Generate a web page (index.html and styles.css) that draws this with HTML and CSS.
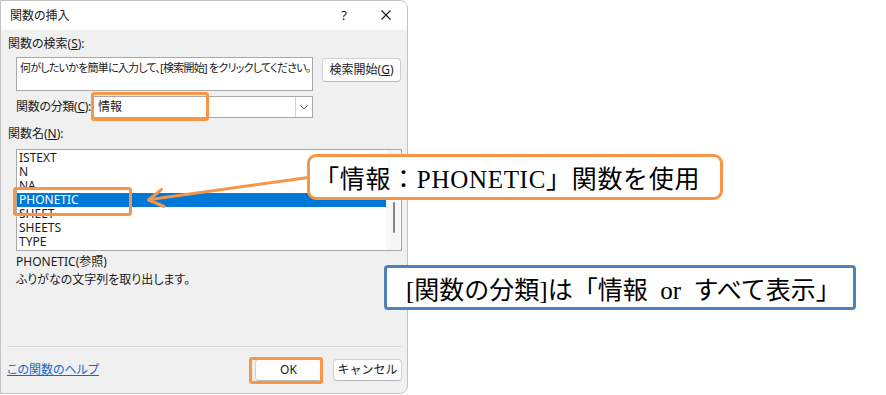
FILE: index.html
```html
<!DOCTYPE html>
<html lang="ja">
<head>
  <meta charset="UTF-8">
  <title>関数の挿入</title>
  <link rel="stylesheet" href="styles.css">
</head>
<body>

<div class="dialog">
  <div class="titlebar">
    <span class="title">関数の挿入</span>
    <div class="caption-btns">
      <span class="cap-btn help">?</span>
      <span class="cap-btn close">
        <svg viewBox="0 0 10 10" width="10" height="10">
          <path d="M0.5 0.5 L9.5 9.5 M9.5 0.5 L0.5 9.5" stroke="#1a1a1a" stroke-width="1.1" fill="none"/>
        </svg>
      </span>
    </div>
  </div>

  <div class="dialog-body">
    <div class="label first">関数の検索(<u>S</u>):</div>
    <div class="search-row">
      <div class="search-box">何がしたいかを簡単に入力して、[検索開始] をクリックしてください。</div>
      <button class="btn search-btn">検索開始(<u>G</u>)</button>
    </div>

    <div class="category-row">
      <span class="cat-label">関数の分類(<u>C</u>):</span>
      <div class="select-box">
        <span class="select-value">情報</span>
        <span class="select-arrow">
          <svg viewBox="0 0 8 5" width="8" height="5">
            <path d="M0.5 0.5 L4 4 L7.5 0.5" stroke="#606060" stroke-width="1" fill="none"/>
          </svg>
        </span>
      </div>
    </div>

    <div class="label second">関数名(<u>N</u>):</div>
    <div class="list-box">
      <ul class="func-list">
        <li>ISTEXT</li>
        <li>N</li>
        <li>NA</li>
        <li class="selected">PHONETIC</li>
        <li>SHEET</li>
        <li>SHEETS</li>
        <li>TYPE</li>
      </ul>
      <div class="scrollbar"><div class="thumb"></div></div>
    </div>

    <div class="desc">
      <div>PHONETIC(参照)</div>
      <div>ふりがなの文字列を取り出します。</div>
    </div>

    <div class="separator"></div>

    <div class="footer">
      <a class="help-link" href="#">この関数のヘルプ</a>
      <div class="footer-btns">
        <button class="btn ok-btn">OK</button>
        <button class="btn cancel-btn">キャンセル</button>
      </div>
    </div>
  </div>
</div>

<!-- annotations drawn over the screenshot -->
<div class="mark mark-category"></div>
<div class="mark mark-phonetic"></div>
<div class="mark mark-ok"></div>

<svg class="arrow" viewBox="0 0 886 395" width="886" height="395">
  <path d="M150 199.5 L312 177" stroke="#f79646" stroke-width="3" fill="none" stroke-linecap="round"/>
  <path d="M161.5 189.5 L148.5 200 L164 206.5" stroke="#f79646" stroke-width="3" fill="none" stroke-linecap="round" stroke-linejoin="round"/>
</svg>

<div class="callout callout-orange">「情報：PHONETIC」関数を使用</div>
<div class="callout callout-blue">[関数の分類]は「情報&nbsp;&nbsp;or&nbsp;&nbsp;すべて表示」</div>

</body>
</html>
```

FILE: styles.css
```css
:root {
  --orange: #f79646;
  --blue: #4f81bd;
  --dialog-bg: #f0f0f0;
  --field-border: #a9a9a9;
  --select: #0078d7;
}
body {
  margin: 0;
  width: 886px;
  height: 395px;
  background: #fff;
  position: relative;
  overflow: hidden;
  font-family: 'Noto Sans', 'Noto Sans CJK JP', sans-serif;
  font-size: 12px;
  color: #1a1a1a;
}
.dialog {
  box-sizing: border-box;
  width: 408px;
  height: 394px;
  background: var(--dialog-bg);
  border: 1px solid #c3c3c3;
  border-radius: 0 8px 8px 0;
  overflow: hidden;
  font-feature-settings: "palt";
}
.titlebar {
  height: 29px;
  background: #fff;
  display: flex;
  align-items: center;
  padding-left: 9px;
}
.title {
  line-height: 16px;
}
.caption-btns {
  margin-left: auto;
  display: flex;
}
.cap-btn {
  width: 42px;
  height: 29px;
  display: flex;
  align-items: center;
  justify-content: center;
}
.cap-btn.help {
  font-size: 13px;
  padding-bottom: 1px;
}
.dialog-body {
  padding: 0 5px 0 7px;
}
.label {
  line-height: 16px;
}
.label.first {
  margin-top: 6px;
}
.label.second {
  margin-top: 8px;
}
.search-row {
  display: flex;
  align-items: flex-start;
  margin: 5px 0 0 8px;
}
.search-box {
  box-sizing: border-box;
  width: 297px;
  height: 34px;
  background: #fff;
  border: 1px solid var(--field-border);
  padding: 2px 2px 2px 3px;
  font-size: 11px;
  line-height: 16px;
  letter-spacing: -0.75px;
  white-space: nowrap;
  overflow: hidden;
}
.btn {
  box-sizing: border-box;
  font-family: inherit;
  font-size: 12px;
  color: #1a1a1a;
  background: #fdfdfd;
  border: 1px solid #d0d0d0;
  border-bottom-color: #b8b8b8;
  border-radius: 4px;
  padding: 0;
  line-height: 16px;
  white-space: nowrap;
}
.search-btn {
  width: 79px;
  height: 24px;
  margin: 1px 0 0 9px;
}
.category-row {
  display: flex;
  align-items: center;
  margin-top: 5px;
  padding-left: 8px;
  height: 22px;
}
.cat-label {
  flex: none;
  width: 76px;
  line-height: 16px;
  letter-spacing: -0.3px;
  white-space: nowrap;
}
.select-box {
  box-sizing: border-box;
  width: 221px;
  height: 22px;
  background: #fff;
  border: 1px solid var(--field-border);
  display: flex;
  align-items: center;
}
.select-value {
  padding-left: 5px;
  line-height: 16px;
}
.select-arrow {
  margin-left: auto;
  width: 16px;
  height: 20px;
  border-left: 1px solid #d4d4d4;
  display: flex;
  align-items: center;
  justify-content: center;
}
.list-box {
  box-sizing: border-box;
  width: 386px;
  height: 102px;
  margin: 7px 0 0 8px;
  background: #fff;
  border: 1px solid var(--field-border);
  display: flex;
}
.func-list {
  list-style: none;
  margin: 0;
  padding: 1px 0 0;
  flex: 1;
}
.func-list li {
  height: 14px;
  line-height: 14px;
  padding-left: 2px;
}
.func-list li.selected {
  background: var(--select);
  color: #fff;
}
.scrollbar {
  width: 15px;
  background: #f7f7f7;
  display: flex;
  justify-content: center;
}
.thumb {
  width: 2px;
  height: 31px;
  margin-top: 52px;
  background: #858585;
  border-radius: 1px;
}
.desc {
  margin: 2px 0 0 8px;
  line-height: 18px;
}
.separator {
  height: 1px;
  background: #dadada;
  margin: 57px 0 0 -1px;
}
.footer {
  display: flex;
  align-items: center;
  margin-top: 12px;
}
.help-link {
  color: #1a66cc;
  text-decoration: underline;
  line-height: 16px;
  margin-left: -1px;
}
.footer-btns {
  margin-left: auto;
  display: flex;
  gap: 11px;
}
.ok-btn {
  width: 67px;
  height: 22px;
}
.cancel-btn {
  width: 69px;
  height: 22px;
}
.mark {
  position: absolute;
  box-sizing: border-box;
  border: 3px solid var(--orange);
  border-radius: 3px;
}
.mark-category {
  left: 91px;
  top: 92px;
  width: 118px;
  height: 29px;
}
.mark-phonetic {
  left: 13px;
  top: 187px;
  width: 119px;
  height: 29px;
}
.mark-ok {
  left: 249px;
  top: 357px;
  width: 74px;
  height: 27px;
}
.arrow {
  position: absolute;
  left: 0;
  top: 0;
  pointer-events: none;
}
.callout {
  position: absolute;
  box-sizing: border-box;
  background: #fff;
  display: flex;
  align-items: center;
  font-family: 'Liberation Serif', 'Noto Sans CJK JP', serif;
  font-size: 25px;
  color: #000;
  white-space: nowrap;
}
.callout-orange {
  left: 307px;
  top: 154px;
  width: 416px;
  height: 46px;
  border: 3px solid var(--orange);
  border-radius: 9px;
  padding-left: 4px;
  letter-spacing: 0.7px;
}
.callout-blue {
  left: 384px;
  top: 265px;
  width: 472px;
  height: 45px;
  border: 3px solid var(--blue);
  border-radius: 4px;
  padding-left: 19px;
}
```
